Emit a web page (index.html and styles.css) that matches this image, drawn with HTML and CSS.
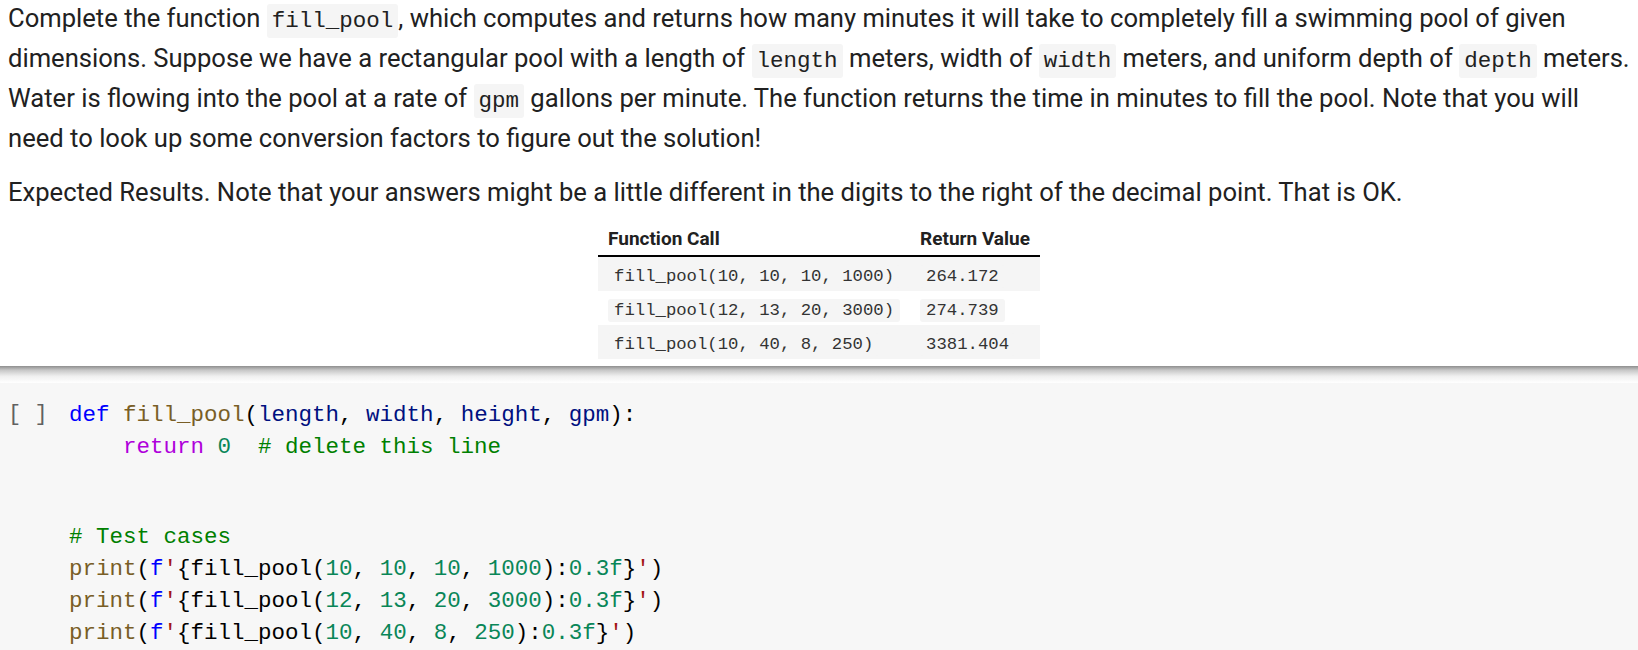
FILE: index.html
```html
<!DOCTYPE html>
<html>
<head>
<meta charset="utf-8">
<link rel="stylesheet" href="styles.css">
</head>
<body>
<div class="md">
  <p class="para">Complete the function <code class="ic">fill_pool</code>, which computes and returns how many minutes it will take to completely fill a swimming pool of given<br>dimensions. Suppose we have a rectangular pool with a length of <code class="ic">length</code> meters, width of <code class="ic">width</code> meters, and uniform depth of <code class="ic">depth</code> meters.<br>Water is flowing into the pool at a rate of <code class="ic">gpm</code> gallons per minute. The function returns the time in minutes to fill the pool. Note that you will<br>need to look up some conversion factors to figure out the solution!</p>
  <p class="para para2">Expected Results. Note that your answers might be a little different in the digits to the right of the decimal point. That is OK.</p>
  <table class="results">
    <thead>
      <tr><th>Function Call</th><th>Return Value</th></tr>
    </thead>
    <tbody>
      <tr class="odd"><td><code class="tc">fill_pool(10, 10, 10, 1000)</code></td><td><code class="tc">264.172</code></td></tr>
      <tr><td><code class="tc">fill_pool(12, 13, 20, 3000)</code></td><td><code class="tc">274.739</code></td></tr>
      <tr class="odd"><td><code class="tc">fill_pool(10, 40, 8, 250)</code></td><td><code class="tc">3381.404</code></td></tr>
    </tbody>
  </table>
</div>
<div class="shadow"></div>
<div class="cell">
  <div class="prompt">[ ]</div>
  <div class="code">
    <div class="line"><span class="kw">def</span> <span class="fn">fill_pool</span>(<span class="pa">length</span>, <span class="pa">width</span>, <span class="pa">height</span>, <span class="pa">gpm</span>):</div>
    <div class="line">    <span class="rt">return</span> <span class="nu">0</span>  <span class="cm"># delete this line</span></div>
    <div class="blank"></div>
    <div class="line"><span class="cm"># Test cases</span></div>
    <div class="line"><span class="fn">print</span>(<span class="kw">f</span><span class="st">'</span>{fill_pool(<span class="nu">10</span>, <span class="nu">10</span>, <span class="nu">10</span>, <span class="nu">1000</span>):<span class="nu">0.3f</span>}<span class="st">'</span>)</div>
    <div class="line"><span class="fn">print</span>(<span class="kw">f</span><span class="st">'</span>{fill_pool(<span class="nu">12</span>, <span class="nu">13</span>, <span class="nu">20</span>, <span class="nu">3000</span>):<span class="nu">0.3f</span>}<span class="st">'</span>)</div>
    <div class="line"><span class="fn">print</span>(<span class="kw">f</span><span class="st">'</span>{fill_pool(<span class="nu">10</span>, <span class="nu">40</span>, <span class="nu">8</span>, <span class="nu">250</span>):<span class="nu">0.3f</span>}<span class="st">'</span>)</div>
  </div>
</div>
</body>
</html>
```
FILE: styles.css
```css
html, body {
  margin: 0;
  padding: 0;
  background: #ffffff;
  overflow: hidden;
}
body {
  width: 1638px;
  height: 650px;
}
.md {
  padding: 0 8px;
  margin-top: -2px;
  font-family: Roboto, "Liberation Sans", sans-serif;
  color: #212121;
}
.para {
  margin: 0;
  font-size: 25.6px;
  line-height: 40px;
  white-space: nowrap;
}
.para2 {
  margin-top: 14px;
}
.ic {
  font-family: "Liberation Mono", monospace;
  font-size: 22.5px;
  line-height: 1;
  background: #f5f5f5;
  border-radius: 3px;
  padding: 4px 5px;
  color: #212121;
}
.results {
  margin: 10px auto 0;
  border-collapse: collapse;
  font-family: Roboto, "Liberation Sans", sans-serif;
}
.results th {
  font-size: 19px;
  font-weight: 700;
  text-align: left;
  padding: 0 10px;
  height: 33px;
  border-bottom: 2px solid #000;
  color: #212121;
}
.results td {
  padding: 3px 10px 0;
  height: 31px;
}
.results tr.odd td {
  background: #f5f5f5;
}
.tc {
  font-family: "Liberation Mono", monospace;
  font-size: 17.3px;
  background: #f5f5f5;
  border-radius: 3px;
  padding: 2px 6px;
  color: #333;
}
.shadow {
  margin-top: 7px;
  height: 17px;
  background: linear-gradient(#8f8f8f 0%, #c8c8c8 25%, #f0f0f0 60%, #ffffff 100%);
}
.cell {
  background: #f7f7f7;
  height: 267px;
  box-sizing: border-box;
  display: flex;
  padding-top: 16px;
  overflow: hidden;
  font-family: "Liberation Mono", monospace;
}
.prompt {
  width: 69px;
  flex: none;
  padding-left: 8px;
  box-sizing: border-box;
  font-size: 22px;
  line-height: 32px;
  color: #616161;
  white-space: pre;
}
.code {
  font-size: 22.5px;
  line-height: 32px;
  color: #000;
}
.line {
  white-space: pre;
  height: 32px;
}
.blank {
  height: 58px;
}
.kw { color: #0000ff; }
.fn { color: #795e26; }
.pa { color: #001080; }
.rt { color: #af00db; }
.nu { color: #098658; }
.cm { color: #008000; }
.st { color: #a31515; }
```
